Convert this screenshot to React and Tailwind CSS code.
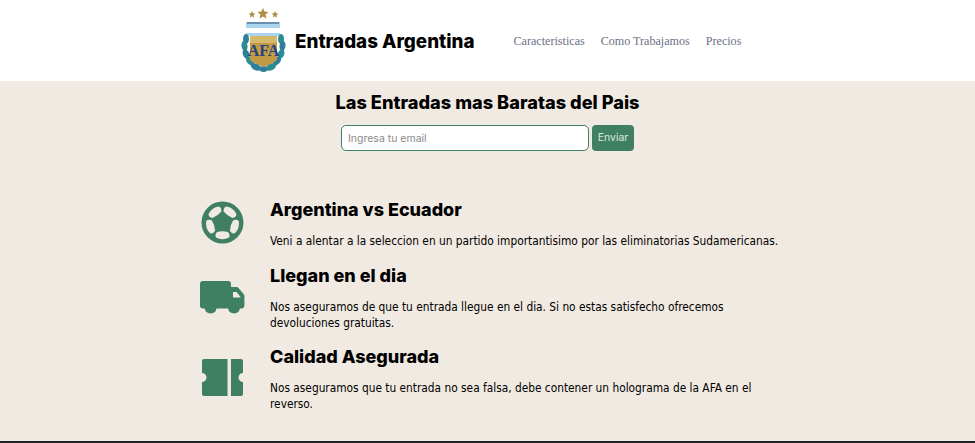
import React from "react";

const leaves = [
  [5, 31, 3, 5, 0],
  [3.500, 38, 3, 5, -8],
  [5, 46, 3.2, 5, -20],
  [9, 53, 3.2, 5, -40],
  [15, 59, 3.2, 5.500, -65],
  [40, 31, 3, 5, 0],
  [41.500, 38, 3, 5, 8],
  [40, 46, 3.2, 5, 20],
  [36, 53, 3.2, 5, 40],
  [30, 59, 3.2, 5.500, 65],
  [22.500, 61, 4, 3, 0],
];

const Logo = () => (
  <svg width="46" height="65" viewBox="0 0 46 65" className="shrink-0">
    <g fill="#b08d45">
      <path d="M22 0l1.600 3.600 3.900.4-2.900 2.600.8 3.900-3.400-2-3.400 2 .8-3.900L16.500 4l3.900-.4z" />
      <path d="M11 3l1 2.200 2.400.3-1.800 1.600.5 2.400-2.100-1.200-2.100 1.200.5-2.400-1.800-1.600 2.400-.3z" />
      <path d="M34 3l1 2.200 2.400.3-1.800 1.600.5 2.400-2.100-1.200-2.100 1.200.5-2.400-1.800-1.600 2.400-.3z" />
    </g>
    <rect x="5" y="14" width="34" height="14" fill="#a9d4ee" />
    <rect x="6" y="14" width="32" height="2" fill="#6d8fae" />
    <rect x="4" y="20" width="36" height="5" fill="#ffffff" />
    {leaves.map(([cx, cy, rx, ry, r], i) => (
      <ellipse
        key={i}
        cx={cx}
        cy={cy}
        rx={rx}
        ry={ry}
        transform={`rotate(${r} ${cx} ${cy})`}
        fill={i % 2 ? "#2b8c92" : "#2f7f9c"}
      />
    ))}
    <path d="M9 28h27v23c0 3-7 5-13.500 8C16 56 9 54 9 51z" fill="#c09a45" />
    <path d="M9 28h27v7H9z" fill="#d6ba6c" />
    <text
      x="22.500"
      y="48"
      textAnchor="middle"
      fontFamily="'Liberation Serif', serif"
      fontWeight="700"
      fontSize="16"
      fill="#24427e"
    >
      AFA
    </text>
  </svg>
);

const panelAngles = [36, 108, 180, 252, 324];

const Ball = () => (
  <svg width="43" height="43" viewBox="0 0 43 43">
    <circle cx="21.500" cy="21.500" r="21" fill="#3f7f63" />
    {panelAngles.map((a) => (
      <path
        key={a}
        d="M15 6.500Q21.500 3 28 6.500Q29.500 9 27 12Q21.500 13.500 16 12Q13.500 9 15 6.500z"
        fill="#f1eae2"
        transform={`rotate(${a} 21.500 21.500)`}
      />
    ))}
  </svg>
);

const Truck = () => (
  <svg width="45" height="33" viewBox="0 0 45 33">
    <path
      d="M3 0h25a3 3 0 0 1 3 3v3h5.500a3 3 0 0 1 2 1l5 6a3 3 0 0 1 .9 2v9.500a3 3 0 0 1-3 3h-1.500a6 6 0 0 1-11.800 0H16.500a6 6 0 0 1-11.800 0H3a3 3 0 0 1-3-3V3a3 3 0 0 1 3-3z"
      fill="#3f7f63"
    />
    <path d="M33 11h3.500l4 5v.5H33z" fill="#f1eae2" />
  </svg>
);

const Ticket = () => (
  <svg width="41" height="37" viewBox="0 0 41 37">
    <path d="M2 0h23.500v37H2a2 2 0 0 1-2-2V23a4.500 4.500 0 0 0 0-9V2a2 2 0 0 1 2-2z" fill="#3f7f63" />
    <path d="M29 0h10a2 2 0 0 1 2 2v12a4.500 4.500 0 0 0 0 9v12a2 2 0 0 1-2 2H29z" fill="#3f7f63" />
  </svg>
);

const Feature = ({ icon, title, children, iconClass }) => (
  <div className="flex">
    <div className={`w-[81px] shrink-0 flex justify-center pr-[15px] ${iconClass}`}>{icon}</div>
    <div className="w-[510px]">
      <h3 className="text-[18px] leading-[23px] font-extrabold font-['Inter'] text-black mb-[12px]">{title}</h3>
      <p className="text-[11.800px] leading-[16px] font-['DejaVu_Sans','sans-serif'] [font-stretch:condensed] text-black">{children}</p>
    </div>
  </div>
);

export default function App() {
  return (
    <div className="w-[975px] h-[443px] overflow-hidden bg-[#f1eae2] flex flex-col font-['Inter']">
      <header className="h-[81px] bg-white flex items-center pl-[241px]">
        <Logo />
        <div className="ml-[8px] mt-[3px] text-[18.800px] font-extrabold text-black">Entradas Argentina</div>
        <nav className="ml-[39px] mt-[2px] flex gap-[16px] text-[12.100px] text-[#6b7187] font-['Liberation_Serif',serif]">
          <a>Caracteristicas</a>
          <a>Como Trabajamos</a>
          <a>Precios</a>
        </nav>
      </header>
      <section className="flex flex-col items-center pt-[9px]">
        <h1 className="text-[18.200px] leading-[24px] font-extrabold text-black">Las Entradas mas Baratas del Pais</h1>
        <form className="mt-[11px] flex gap-[3px]">
          <input
            placeholder="Ingresa tu email"
            className="w-[248px] h-[26px] bg-white rounded-[5px] border border-[#3f7f63] px-[6px] text-[10.500px] placeholder:text-[#8a8a8a] outline-none"
          />
          <button type="button" className="w-[42px] h-[26px] rounded-[4px] bg-[#3f7f63] text-[#dfe6df] text-[10.500px]">Enviar</button>
        </form>
      </section>
      <section className="pl-[189px] pt-[47px] flex flex-col flex-1">
        <Feature icon={<Ball />} iconClass="pt-[3px]" title="Argentina vs Ecuador">
          Veni a alentar a la seleccion en un partido importantisimo por las eliminatorias Sudamericanas.
        </Feature>
        <div className="h-[15px]" />
        <Feature icon={<Truck />} iconClass="pt-[17px]" title="Llegan en el dia">
          Nos aseguramos de que tu entrada llegue en el dia. Si no estas satisfecho ofrecemos devoluciones gratuitas.
        </Feature>
        <div className="h-[14px]" />
        <Feature icon={<Ticket />} iconClass="pt-[14px]" title="Calidad Asegurada">
          Nos aseguramos que tu entrada no sea falsa, debe contener un holograma de la AFA en el reverso.
        </Feature>
      </section>
      <div className="h-[2px] bg-[#222]" />
    </div>
  );
}
